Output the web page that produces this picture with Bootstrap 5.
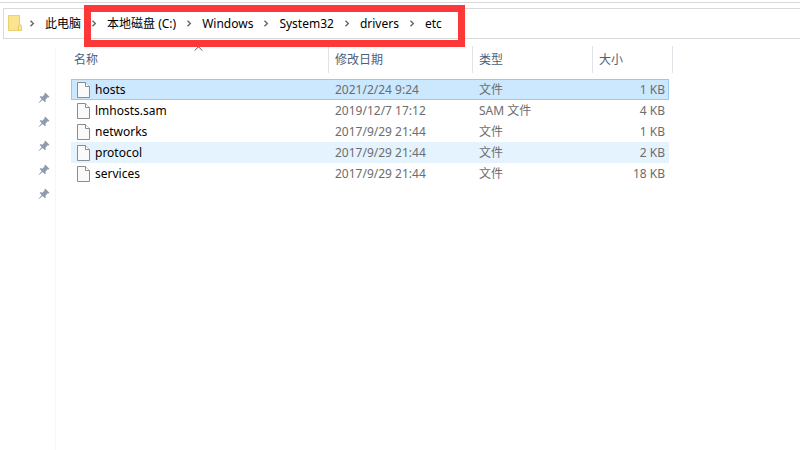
<!DOCTYPE html>
<html lang="zh-CN">
<head>
<meta charset="utf-8">
<meta name="viewport" content="width=device-width, initial-scale=1">
<title>etc</title>
<link href="https://cdn.jsdelivr.net/npm/bootstrap@5.3.0/dist/css/bootstrap.min.css" rel="stylesheet">
<style>
body { font: 12px/20px "Noto Sans", "Noto Sans CJK SC", sans-serif; color: #000; background: #fff; }
.ribbon-edge { height: 3px; border-bottom: 1px solid #d9d9d9; }
.address { height: 31px; margin: 5px 0 0 3px; padding-left: 4px; border: 1px solid #d9d9d9; border-right: 0; }
.crumbs { gap: 10px; white-space: nowrap; }
.crumbs a { color: #000; text-decoration: none; }
.folder { margin-right: -3px; }
.marked { height: 29px; }
.marked::after { content: ""; position: absolute; inset: -4px -23px -9px -7px; border: 7px solid #fd3838; z-index: 2; pointer-events: none; }
.pins { width: 56px; padding: 39px 5px 0 0; border-right: 1px solid #f5f7fa; }
.pins button { height: 24px; width: 12px; }
.files { width: 602px; table-layout: fixed; margin: 3px 0 0 15px; border-collapse: separate; border-spacing: 0; }
.files th { font-weight: 400; color: #4c607a; padding: 0 0 6px; }
.head-cell { height: 27px; padding-left: 6px; border-right: 1px solid #e0e4e9; }
.head-cell.first { padding-left: 3px; }
.head-cell.joined { border-right: 0; }
.head-cell.tail { padding-left: 0; }
.sort { top: 0; left: 123px; }
.files td { height: 21px; padding: 0 6px; color: #6d6d6d; white-space: nowrap; line-height: 19px; border: 0 solid #99c9ef; }
.files td.size { padding-right: 4px; }
.files .item a { color: #000; text-decoration: none; gap: 5px; }
.files .picked td:not(.rest) { background: #cce8ff; border-width: 1px 0; }
.files .picked td.item { border-left-width: 1px; padding-left: 5px; }
.files .picked td.size { border-right-width: 1px; padding-right: 3px; }
.files .hovered td:not(.rest) { background: #e5f3ff; }
.files td.rest { padding: 0; }
</style>
<script src="https://cdn.jsdelivr.net/npm/bootstrap@5.3.0/dist/js/bootstrap.bundle.min.js"></script>
</head>
<body class="d-flex flex-column min-vh-100 overflow-hidden">
<svg class="d-none" aria-hidden="true">
  <symbol id="chev" viewBox="0 0 6 7"><path d="M1.500 .7 4.300 3.500 1.500 6.300" fill="none" stroke="#666" stroke-width="1.4"/></symbol>
  <symbol id="doc" viewBox="0 0 13 16"><path d="M.5 .5H8.500L12.500 4.500V15.500H.5Z" fill="#fafafa" stroke="#8c8c8c"/><path d="M8.500 .5V4.500H12.500" fill="#fff" stroke="#8c8c8c"/></symbol>
  <symbol id="pin" viewBox="0 0 12 12"><path d="M7.200 .6 11.400 4.800 10.500 5.500 9.700 5.300 7.600 7.400 7.700 9.700 6.900 10.300 4.600 8 .8 11.200 .5 10.900 3.700 7.100 1.600 4.900 2.300 4.200 4.600 4.400 6.700 2.300 6.400 1.400Z" fill="#8b9caf"/></symbol>
</svg>
<div class="ribbon-edge"></div>
<nav class="address d-flex align-items-center" aria-label="地址栏">
  <div class="crumbs d-flex align-items-center">
    <svg class="folder" width="14" height="17" viewBox="0 0 14 17" aria-hidden="true"><path d="M.5 .5H11.500V10L13.500 11V15.500H.5Z" fill="#fbe491" stroke="#ecd06f"/><path d="M10.500 15.500V11L12 9.500 13.500 11V15.500Z" fill="#fbe89d" stroke="#e8c95f"/></svg>
    <svg width="6" height="7" aria-hidden="true"><use href="#chev"/></svg>
    <a href="#">此电脑</a>
    <div class="marked crumbs d-flex align-items-center position-relative">
      <svg width="6" height="7" aria-hidden="true"><use href="#chev"/></svg>
      <a href="#">本地磁盘 (C:)</a>
      <svg width="6" height="7" aria-hidden="true"><use href="#chev"/></svg>
      <a href="#">Windows</a>
      <svg width="6" height="7" aria-hidden="true"><use href="#chev"/></svg>
      <a href="#">System32</a>
      <svg width="6" height="7" aria-hidden="true"><use href="#chev"/></svg>
      <a href="#">drivers</a>
      <svg width="6" height="7" aria-hidden="true"><use href="#chev"/></svg>
      <a href="#">etc</a>
    </div>
  </div>
</nav>
<div class="d-flex flex-grow-1 mt-1">
  <aside class="pins d-flex flex-column align-items-end flex-shrink-0 mt-1" aria-label="快速访问">
    <button class="border-0 bg-transparent p-0 d-flex align-items-center" aria-label="取消固定"><svg width="12" height="12"><use href="#pin"/></svg></button>
    <button class="border-0 bg-transparent p-0 d-flex align-items-center" aria-label="取消固定"><svg width="12" height="12"><use href="#pin"/></svg></button>
    <button class="border-0 bg-transparent p-0 d-flex align-items-center" aria-label="取消固定"><svg width="12" height="12"><use href="#pin"/></svg></button>
    <button class="border-0 bg-transparent p-0 d-flex align-items-center" aria-label="取消固定"><svg width="12" height="12"><use href="#pin"/></svg></button>
    <button class="border-0 bg-transparent p-0 d-flex align-items-center" aria-label="取消固定"><svg width="12" height="12"><use href="#pin"/></svg></button>
  </aside>
  <main>
    <table class="files">
      <colgroup><col style="width:258px"><col style="width:144px"><col style="width:120px"><col style="width:76px"><col style="width:4px"></colgroup>
      <thead>
        <tr>
          <th scope="col" aria-sort="ascending"><div class="head-cell first d-flex align-items-center position-relative">名称<svg class="sort position-absolute" width="9" height="5" viewBox="0 0 9 5" aria-hidden="true"><path d="M.8 4.500 4.500 .8 8.200 4.500" fill="none" stroke="#555"/></svg></div></th>
          <th scope="col"><div class="head-cell d-flex align-items-center">修改日期</div></th>
          <th scope="col"><div class="head-cell d-flex align-items-center">类型</div></th>
          <th scope="col"><div class="head-cell joined d-flex align-items-center">大小</div></th>
          <td class="rest align-top"><div class="head-cell tail"></div></td>
        </tr>
      </thead>
      <tbody>
        <tr class="picked"><td class="item"><a class="d-flex align-items-center" href="#"><svg width="13" height="16" aria-hidden="true"><use href="#doc"/></svg>hosts</a></td><td>2021/2/24 9:24</td><td>文件</td><td class="size text-end">1 KB</td><td class="rest"></td></tr>
        <tr><td class="item"><a class="d-flex align-items-center" href="#"><svg width="13" height="16" aria-hidden="true"><use href="#doc"/></svg>lmhosts.sam</a></td><td>2019/12/7 17:12</td><td>SAM 文件</td><td class="size text-end">4 KB</td><td class="rest"></td></tr>
        <tr><td class="item"><a class="d-flex align-items-center" href="#"><svg width="13" height="16" aria-hidden="true"><use href="#doc"/></svg>networks</a></td><td>2017/9/29 21:44</td><td>文件</td><td class="size text-end">1 KB</td><td class="rest"></td></tr>
        <tr class="hovered"><td class="item"><a class="d-flex align-items-center" href="#"><svg width="13" height="16" aria-hidden="true"><use href="#doc"/></svg>protocol</a></td><td>2017/9/29 21:44</td><td>文件</td><td class="size text-end">2 KB</td><td class="rest"></td></tr>
        <tr><td class="item"><a class="d-flex align-items-center" href="#"><svg width="13" height="16" aria-hidden="true"><use href="#doc"/></svg>services</a></td><td>2017/9/29 21:44</td><td>文件</td><td class="size text-end">18 KB</td><td class="rest"></td></tr>
      </tbody>
    </table>
  </main>
</div>
</body>
</html>
